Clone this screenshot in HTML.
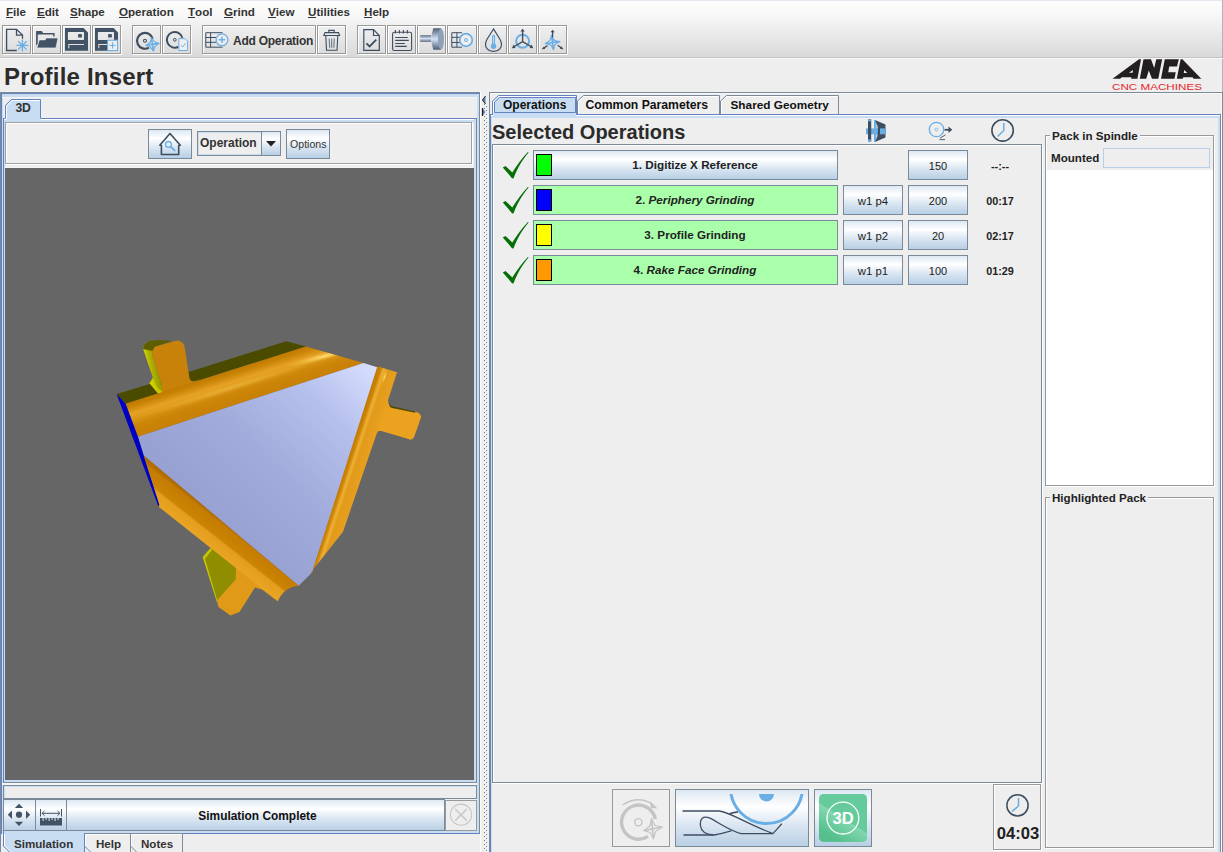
<!DOCTYPE html>
<html><head><meta charset="utf-8">
<style>
*{box-sizing:border-box;margin:0;padding:0}
html,body{width:1223px;height:852px;overflow:hidden;background:#eeeeee;font-family:"Liberation Sans",sans-serif;color:#333333;position:relative}
.a{position:absolute}
.b{font-weight:bold}
.menu{left:0;top:0;width:1223px;height:57px;background:linear-gradient(#fdfdfd 0px,#f8f8f8 14px,#dadada 56px)}
.mi{position:absolute;top:5px;font-size:11.6px;font-weight:bold;color:#333}
.mi u{text-decoration:none;display:inline-block;line-height:11px;border-bottom:1px solid #333;}
.tb{position:absolute;top:25px;height:29px;width:29px;border:1px solid #999;background:transparent;box-shadow:inset 1px 1px 0 #fff,1px 1px 0 #fff}
.sep57{left:0;top:57px;width:1223px;height:1px;background:#c4c4c4}
.btn{position:absolute;border:1px solid #7a8a99;background:linear-gradient(#dde8f3 0%,#ffffff 30%,#dde8f3 60%,#b8cfe5 100%)}
.btn2{position:absolute;border:1px solid #7a8a99;background:linear-gradient(#dde8f3 0%,#ffffff 25%,#b8cfe5 100%)}
.gbtn{position:absolute;border:1px solid #7a8a99;background:#aaffaa}
.sw{position:absolute;left:2px;top:2px;width:17px;height:20px;border:1px solid #000}
.lbl{position:absolute;left:0;right:0;text-align:center;font-size:12px;font-weight:bold;color:#333}
</style></head>
<body>
<!-- menubar + toolbar -->
<div class="a menu"></div>
<div class="a" style="left:0;top:0;width:1223px;height:1px;background:#e4e8ee"></div>
<div class="mi" style="left:6px"><u>F</u>ile</div>
<div class="mi" style="left:37px"><u>E</u>dit</div>
<div class="mi" style="left:70px"><u>S</u>hape</div>
<div class="mi" style="left:119px"><u>O</u>peration</div>
<div class="mi" style="left:188px"><u>T</u>ool</div>
<div class="mi" style="left:224px"><u>G</u>rind</div>
<div class="mi" style="left:268px"><u>V</u>iew</div>
<div class="mi" style="left:308px"><u>U</u>tilities</div>
<div class="mi" style="left:364px"><u>H</u>elp</div>

<div class="tb" style="left:2px;width:29px"></div>
<div class="tb" style="left:32px;width:29px"></div>
<div class="tb" style="left:62px;width:29px"></div>
<div class="tb" style="left:92px;width:29px"></div>
<div class="tb" style="left:132px;width:29px"></div>
<div class="tb" style="left:162px;width:29px"></div>
<div class="tb" style="left:202px;width:114px"></div>
<div class="tb" style="left:317px;width:29px"></div>
<div class="tb" style="left:357px;width:29px"></div>
<div class="tb" style="left:387px;width:29px"></div>
<div class="tb" style="left:417px;width:29px"></div>
<div class="tb" style="left:447px;width:30px"></div>
<div class="tb" style="left:478px;width:29px"></div>
<div class="tb" style="left:508px;width:29px"></div>
<div class="tb" style="left:538px;width:29px"></div>
<div class="a b" style="left:233px;top:34px;font-size:12px;line-height:14px;color:#333;letter-spacing:-0.25px">Add Operation</div>
<svg class="a" style="left:0;top:0" width="600" height="58" viewBox="0 0 600 58">
<defs>
<linearGradient id="shaft" x1="0" y1="0" x2="0" y2="1"><stop offset="0" stop-color="#5d6c80"/><stop offset="0.5" stop-color="#d0def0"/><stop offset="1" stop-color="#5d6c80"/></linearGradient>
<linearGradient id="whl" x1="0" y1="0" x2="0" y2="1"><stop offset="0" stop-color="#4e5e72"/><stop offset="0.5" stop-color="#d4e2f6"/><stop offset="1" stop-color="#4e5e72"/></linearGradient>
</defs>
<g fill="none" stroke="#3e4e61" stroke-width="1.3">
<!-- new doc -->
<path d="M16.8 50.5 H6.6 V29.3 H16.5 L22.5 35.1 V38.7"/>
<path d="M16.5 29.3 V35.1 H22.5"/>
</g>
<g stroke="#6aaee6" stroke-width="1.3">
<path d="M22.4 39.4 V51.4 M16.4 45.4 H28.4 M18.2 41.2 L26.6 49.6 M26.6 41.2 L18.2 49.6"/>
</g>
<!-- folder -->
<path fill="#435366" d="M36.1 31.1 H41.8 L43.1 32.9 H54.6 V36.5 H53.2 V34.6 H37.8 V43.5 L36.6 45.5 L36.1 44.5 Z"/>
<path fill="#435366" stroke="#eeeeee" stroke-width="0.6" d="M36.9 47.9 H55.9 L58 38 H46.2 L45.2 39.9 H39.3 Z"/>
<!-- save -->
<g fill="#435366">
<path d="M65 28 H83.6 L88 32.5 V50.8 H65 Z M68.5 31.9 Q67.9 31.9 67.9 32.6 V39.3 Q67.9 40 68.5 40 H83.4 Q84 40 84 39.3 V32.6 Q84 31.9 83.4 31.9 Z M68.3 44 V48.2 H69.3 V45 H84 V44 Z" fill-rule="evenodd"/>
<rect x="78.1" y="34.1" width="3.8" height="3.4"/>
<path d="M95 28 H113.6 L118 32.5 V50.8 H95 Z M98.5 31.9 Q97.9 31.9 97.9 32.6 V39.3 Q97.9 40 98.5 40 H113.4 Q114 40 114 39.3 V32.6 Q114 31.9 113.4 31.9 Z M98.3 44 V48.2 H99.3 V45 H114 V44 Z" fill-rule="evenodd"/>
<rect x="108.1" y="34.1" width="3.8" height="3.4"/>
</g>
<rect x="107.6" y="40.2" width="10" height="10.4" fill="#eeeeee" stroke="#6aaee6" stroke-width="1"/>
<path d="M112.6 42.3 V48.5 M109.6 45.4 H115.6" stroke="#6aaee6" stroke-width="1"/>
<!-- disc 1 -->
<g fill="none" stroke="#3e4e61">
<path d="M152.6 38.8 A7.9 7.9 0 1 0 148.95 47.64" stroke-width="2.2"/>
<circle cx="145" cy="40.8" r="1.5" stroke-width="1.1"/>
<path d="M182.4 37.8 A7.9 7.9 0 1 0 178.75 46.64" stroke-width="2"/>
<circle cx="174.8" cy="39.8" r="1.4" stroke-width="1"/>
</g>
<path d="M151.5 38.1 L155 42 L158.8 43.4 L154.8 46.5 L153.4 50.8 L150.2 46.8 L146.1 45.3 L150.2 42.3 Z" fill="none" stroke="#6aaee6" stroke-width="1.1"/><path d="M151.5 38.1 L153.4 50.8 M146.1 45.3 L158.8 43.4" stroke="#6aaee6" stroke-width="1.6"/>
<path d="M178.8 38.6 H185 L187.6 41.2 V50.5 H178.8 Z" fill="#eeeeee" stroke="#6aaee6" stroke-width="1"/>
<path d="M180.8 45.5 L182.5 47 L185.5 43.4" fill="none" stroke="#6aaee6" stroke-width="1"/>
<!-- add op table -->
<g fill="none" stroke="#3e4e61" stroke-width="1">
<path d="M222.6 32.7 H205.8 V47.2 H222.6 M210.6 32.7 V47.2 M205.8 37.5 H216 M205.8 42.3 H216"/>
</g>
<circle cx="222" cy="39.8" r="5.9" fill="#eeeeee" stroke="#6aaee6" stroke-width="1.3"/>
<path d="M222 36.5 V43.1 M218.7 39.8 H225.3" stroke="#6aaee6" stroke-width="1.4"/>
<!-- trash -->
<g fill="none" stroke="#3e4e61" stroke-width="1.1">
<path d="M328.8 32.2 V30.4 H334.2 V32.2"/>
<path d="M323.8 35.5 L325 32.6 H338.5 L339.6 35.5 Z"/>
<path d="M325.8 35.8 L326.5 50.3 H337 L337.8 35.8"/>
<path d="M329.2 38.5 L329.7 47.8 M331.7 38.5 V47.8 M334.3 38.5 L333.8 47.8" stroke="#6b7988"/>
</g>
<!-- doc check -->
<g fill="none" stroke="#3e4e61" stroke-width="1.2">
<path d="M373.5 29.6 H363.8 V50.4 H379.3 V35.5 Z"/>
<path d="M373.5 29.6 V35.5 H379.3"/>
</g>
<path d="M366.4 43.3 L369.6 46.4 L376.3 39.6" fill="none" stroke="#3e4e61" stroke-width="1.8"/>
<!-- notepad -->
<g fill="none" stroke="#3e4e61" stroke-width="1.1">
<rect x="392.6" y="32.3" width="19" height="18.2" rx="1.6"/>
<path d="M395.4 30 V33.6 M399.4 30 V33.6 M403.4 30 V33.6 M407.4 30 V33.6"/>
<path d="M395.2 37.5 H407.8 M395.2 40.4 H408.8 M395.2 43.5 H404.8 M395.2 46.4 H406.8"/>
</g>
<!-- wheel -->
<rect x="420.2" y="35.2" width="11" height="6.7" fill="url(#shaft)"/>
<path d="M433.3 28.2 H441 V49.7 H433.3 Q429.3 39 433.3 28.2 Z" fill="url(#whl)"/>
<ellipse cx="441" cy="39" rx="3" ry="10.6" fill="#8fa1b9"/>
<!-- table disc -->
<g fill="none" stroke="#3e4e61" stroke-width="1">
<path d="M462 32.7 H451.8 V47.2 H462 M456.9 32.7 V47.2 M451.8 37.3 H460 M451.8 42.5 H460"/>
</g>
<circle cx="466" cy="40" r="6.3" fill="#eeeeee" stroke="#6aaee6" stroke-width="1.7"/>
<circle cx="466" cy="40" r="1.5" fill="none" stroke="#6aaee6" stroke-width="1"/>
<!-- drop -->
<path d="M493.5 29 L487.2 39 Q484.6 43.5 486 47 Q488 51.3 493.5 51.3 Q499 51.3 501 47 Q502.4 43.5 499.8 39 Z" fill="none" stroke="#3e4e61" stroke-width="1.2"/>
<rect x="492" y="34.8" width="3.1" height="11" rx="1.5" fill="#6aaee6"/>
<rect x="493.2" y="36" width="0.8" height="7.5" fill="#cfe4f8"/>
<circle cx="493.55" cy="46.2" r="2.7" fill="#6aaee6"/>
<!-- axes 1 -->
<circle cx="522.6" cy="41.2" r="6.5" fill="none" stroke="#6aaee6" stroke-width="2"/>
<g stroke="#3e4e61" stroke-width="1.4" fill="#3e4e61">
<path d="M522.6 41.6 V30.5 M522.6 41.6 L513.5 47 M522.6 41.6 L531.7 47" fill="none"/>
<path d="M520.4 31.5 L522.6 28.8 L524.8 31.5 Z M513.8 44.6 L511.8 48.2 L515.6 47.9 Z M531.4 44.6 L533.4 48.2 L529.6 47.9 Z" stroke="none"/>
</g>
<!-- axes 2 -->
<g stroke="#6aaee6" fill="none">
<path d="M551.5 35.5 L554 40.5 L559.5 41.6 L555 44.5 L553.5 49.5 L550.7 45 L545.5 43.5 L550 40.5 Z" stroke-width="1.1"/>
<path d="M551.5 35.5 L553.5 49.5 M545.5 43.5 L559.5 41.6" stroke-width="1.7"/>
<path d="M552.2 39.3 A3.3 3.3 0 0 1 555.8 42.5" stroke-width="1.1"/>
</g>
<g stroke="#3e4e61" stroke-width="1.3" fill="#3e4e61">
<path d="M552.6 37.5 V31.5 M547.5 45.6 L543.5 48.2 M557.7 45.2 L561.5 48" fill="none"/>
<path d="M550.5 32.3 L552.6 29.8 L554.7 32.3 Z M544 46.4 L541.7 49.3 L545.3 49 Z M561.3 46.2 L563.6 49.2 L560 49 Z" stroke="none"/>
</g>
</svg>
<div class="a sep57"></div>
<div class="a" style="left:1222px;top:0;width:1px;height:92px;background:#b4b4b4"></div>
<div class="a" style="left:0;top:58px;width:1223px;height:1px;background:#f6f6f6"></div>

<!-- title -->
<div class="a b" style="left:4px;top:63px;font-size:24px;color:#2b2b2b;line-height:28px;letter-spacing:0.2px">Profile Insert</div>


<!-- ===== LEFT PANEL ===== -->
<div class="a" style="left:0;top:92px;width:480px;height:1px;background:#7a8a99"></div>
<div class="a" style="left:0;top:92px;width:1px;height:760px;background:#7a8a99"></div>
<div class="a" style="left:479px;top:92px;width:1px;height:742px;background:#7a8a99"></div>
<div class="a" style="left:480px;top:92px;width:1px;height:760px;background:#ffffff"></div>
<div class="a" style="left:1px;top:93px;width:478px;height:1px;background:#6382bf"></div>
<div class="a" style="left:1px;top:93px;width:1px;height:741px;background:#6382bf"></div>
<div class="a" style="left:2px;top:94px;width:477px;height:3px;background:#c8ddf2"></div>
<div class="a" style="left:2px;top:94px;width:1px;height:739px;background:#c8ddf2"></div>
<div class="a" style="left:477px;top:94px;width:2px;height:739px;background:#c8ddf2"></div>
<div class="a" style="left:2px;top:831px;width:477px;height:2px;background:#c8ddf2"></div>
<div class="a" style="left:84px;top:833px;width:396px;height:1px;background:#6382bf"></div>
<div class="a" style="left:2px;top:97px;width:475px;height:1px;background:#f5f4f2"></div>
<!-- inner tab pane content -->
<div class="a" style="left:3px;top:118px;width:474px;height:665px;background:#c8ddf2;border-top:1px solid #6382bf;border-left:1px solid #6382bf;border-right:1px solid #7a8a99;border-bottom:1px solid #7a8a99"></div>
<div class="a" style="left:40px;top:119px;width:434px;height:1px;background:#fff"></div>
<div class="a" style="left:5px;top:122px;width:469px;height:658px;background:#eeeeee"></div>
<!-- 3D tab -->
<svg class="a" style="left:0;top:96px" width="50" height="26" viewBox="0 96 50 26">
<path d="M5 122 V105 L11 99 H41 V122 Z" fill="#c8ddf2"/>
<path d="M5.5 118 V105.5 L11.5 99.5 H40.5 V118.5" fill="none" stroke="#6382bf" stroke-width="1"/>
<path d="M6.5 119 V106 L12 100.5 H39.5" fill="none" stroke="#fff" stroke-width="1"/>
<path d="M3 118.5 H5.5" stroke="#6382bf" stroke-width="1"/>
<path d="M4 119.5 H6" stroke="#fff" stroke-width="1"/>
</svg>
<div class="a b" style="left:15.5px;top:101px;font-size:12.2px;line-height:14px;color:#333;letter-spacing:-0.3px">3D</div>
<!-- toolbar box -->
<div class="a" style="left:5px;top:122px;width:467px;height:42px;border:1px solid #a0a0a0;box-shadow:inset 1px 1px 0 #fff,1px 1px 0 #fff"></div>
<div class="btn" style="left:148px;top:129px;width:44px;height:30px"></div>
<svg class="a" style="left:148px;top:129px" width="44" height="30" viewBox="148 129 44 30">
<path d="M161.4 154.5 V145.3 H159.8 L170 133.5 L180.3 145.3 H178.7 V154.5 Z" fill="none" stroke="#3e4e61" stroke-width="1.6" stroke-linejoin="round"/>
<circle cx="168.5" cy="144.4" r="2.9" fill="none" stroke="#6aaee6" stroke-width="1.3"/>
<path d="M170.6 146.6 L174.6 150.4" stroke="#6aaee6" stroke-width="1.8" stroke-linecap="round"/>
</svg>
<div class="a" style="left:197px;top:131px;width:84px;height:25px;border:1px solid #7a8a99;background:#eeeeee;box-shadow:inset 1px 1px 0 #c8ddf2, inset -1px -1px 0 #c8ddf2"></div>
<div class="btn" style="left:261px;top:131px;width:20px;height:25px"></div>
<svg class="a" style="left:262px;top:132px" width="18" height="23" viewBox="262 132 18 23"><path d="M266 141 H276 L271 146.5 Z" fill="#222"/></svg>
<div class="a b" style="left:200px;top:136px;font-size:12px;line-height:14px;color:#333">Operation</div>
<div class="btn" style="left:286px;top:129px;width:44px;height:30px"></div>
<div class="a" style="left:290px;top:138px;font-size:10.6px;line-height:12px;color:#333">Options</div>
<!-- viewport -->
<div class="a" style="left:5px;top:168px;width:469px;height:612px;background:#666666"></div>
<div class="a" style="left:5px;top:167px;width:469px;height:1px;background:#f6f6f6"></div>

<!-- 3D model -->
<svg class="a" style="left:5px;top:168px" width="469" height="612" viewBox="5 168 469 612">
<defs>
<linearGradient id="lf" gradientUnits="userSpaceOnUse" x1="372" y1="362" x2="220" y2="520"><stop offset="0" stop-color="#d8e0ff"/><stop offset="0.3" stop-color="#b6c0ec"/><stop offset="0.65" stop-color="#a2acdc"/><stop offset="1" stop-color="#98a2d2"/></linearGradient>
<linearGradient id="tb" gradientUnits="userSpaceOnUse" x1="241" y1="364" x2="251.5" y2="397"><stop offset="0" stop-color="#bc7600"/><stop offset="0.2" stop-color="#c88204"/><stop offset="0.42" stop-color="#e6a226"/><stop offset="0.52" stop-color="#de9a1a"/><stop offset="0.75" stop-color="#cc8608"/><stop offset="1" stop-color="#c88006"/></linearGradient>
<linearGradient id="hl" gradientUnits="userSpaceOnUse" x1="250" y1="360" x2="350" y2="360"><stop offset="0" stop-color="#ffd050" stop-opacity="0"/><stop offset="0.5" stop-color="#ffd860" stop-opacity="0.9"/><stop offset="1" stop-color="#ffd050" stop-opacity="0"/></linearGradient>
<linearGradient id="rb" gradientUnits="userSpaceOnUse" x1="353.2" y1="440" x2="373.2" y2="446.6"><stop offset="0" stop-color="#c07804"/><stop offset="0.18" stop-color="#cc8406"/><stop offset="0.33" stop-color="#eeb034"/><stop offset="0.48" stop-color="#e29a1a"/><stop offset="1" stop-color="#e8a020"/></linearGradient>
<linearGradient id="ys" gradientUnits="userSpaceOnUse" x1="145" y1="365" x2="160" y2="362"><stop offset="0" stop-color="#e0e000"/><stop offset="0.4" stop-color="#b0b000"/><stop offset="1" stop-color="#8a8a00"/></linearGradient>
</defs>
<!-- olive top band -->
<path d="M116.6 394 L145 385.5 L195 370 L286.3 341.2 L306 346.4 L125.6 403.8 Z" fill="#4b4b00"/>
<!-- tab upper-left -->
<path d="M142.8 348 L147.8 362.7 L152.9 377.4 Q151 381 149.4 383 L158 393.5 L163 393 L161.8 384.3 L152.3 355 L154.8 346.8 L152.5 340.2 Q145 342 142.8 348 Z" fill="url(#ys)"/>
<path d="M149.4 383 Q153 380 152.9 377.4 L156 386 Q159 390 162 391 L162.5 393.5 L158 393.5 Z" fill="#d4d400" opacity="0.7"/>
<path d="M142.8 349 Q143.5 343.5 150 340.8 L160 340 L171.8 341 L154.8 346.8 L152.6 351 Z" fill="#5e5e00"/>
<path d="M152.6 351 L154.8 346.8 L176.5 340.6 Q182.5 340.5 184.6 346.4 L188.1 369.6 L189.6 378.9 Q190.5 381 193.5 381.3 L201 379 L162.5 395 L161.8 384.3 L152.3 355 Z" fill="#c8820a"/>
<!-- orange top band -->
<path d="M125.6 403.8 L306 346.4 L363.5 362.9 L137.9 436.7 Z" fill="url(#tb)"/>
<clipPath id="bandclip"><path d="M125.6 403.8 L306 346.4 L363.5 362.9 L137.9 436.7 Z"/></clipPath>
<radialGradient id="hlr"><stop offset="0" stop-color="#ffe27a" stop-opacity="1"/><stop offset="0.5" stop-color="#f8c850" stop-opacity="0.6"/><stop offset="1" stop-color="#f0b040" stop-opacity="0"/></radialGradient>
<g clip-path="url(#bandclip)"><ellipse cx="325" cy="356" rx="42" ry="4" transform="rotate(-15 325 356)" fill="url(#hlr)"/><ellipse cx="230" cy="388" rx="110" ry="4" transform="rotate(-17.5 230 388)" fill="url(#hlr)" opacity="0.35"/></g>
<!-- light face -->
<path d="M137.9 436.7 L363.5 362.9 L378 367.5 L312 572.6 L298.7 585.8 L143.7 455.5 Z" fill="url(#lf)"/>
<!-- blue strip -->
<path d="M116.6 394 L125.6 403.8 L137.9 436.7 L143.7 455.5 L159.5 505 L158.4 506.5 Z" fill="#0000c4"/>
<!-- bottom tab -->
<path d="M202.7 557.1 L210.4 548.3 L214 544 L240 566 L235.8 579.2 L218 603 Z" fill="#8e8e00"/>
<path d="M202.7 557.1 L210.4 548.3 L212 550 L205 558.5 L218 603 L216.5 601 Z" fill="#c6c600"/>
<path d="M217 600.5 L235.8 579.2 L236 566 L274 594 L277.8 601.3 L262 589.5 L255 587.5 L239.5 612 L230.5 615.6 L218.5 607 Z" fill="#e09a18"/>
<!-- lower-left bevel -->
<linearGradient id="llb" gradientUnits="userSpaceOnUse" x1="220.4" y1="520" x2="203.7" y2="541.2"><stop offset="0" stop-color="#b46c00"/><stop offset="0.1" stop-color="#c47c02"/><stop offset="0.56" stop-color="#cc8404"/><stop offset="0.63" stop-color="#e49e1e"/><stop offset="1" stop-color="#eaa424"/></linearGradient>
<path d="M143.7 455.5 L298.7 585.8 Q284 587 277.8 601.3 L158.4 506.5 L159.5 505 Z" fill="url(#llb)"/>
<!-- right bevel -->
<path d="M377.4 366.3 L397 372.2 L388 400.2 Q388.3 405.5 391.7 407 L415 411.8 Q421.5 413.5 420.8 417.6 L413.9 437.2 Q411.5 440.5 408.1 438.8 L381.1 430.8 Q377.8 430 376.9 433 L343 531.7 L309.8 573.7 L312 572.6 Z" fill="url(#rb)"/>
<path d="M391.7 407 L415 411.8 Q421.5 413.5 420.8 417.6 L413.9 437.2 Q411.5 440.5 408.1 438.8 L381.1 430.8 Q377.8 430 376.9 433 L384 410 Z" fill="#eba21e"/>
<path d="M389 404 Q389.5 407 392 408 L415 412.8 L415.5 411.5 L392 406.2 Q390 405.5 389 403 Z" fill="#3c3c00" opacity="0.85"/>
<ellipse cx="384.5" cy="377" rx="1.6" ry="8" transform="rotate(18 384.5 377)" fill="url(#hlr)"/>
</svg>
<!-- status box -->
<div class="a" style="left:2px;top:783px;width:475px;height:2px;background:#f6f5f3"></div>
<div class="a" style="left:3px;top:785px;width:474px;height:14px;border:1px solid #7a8a99;background:#eeeeee;box-shadow:inset 1px 1px 0 #c8ddf2"></div>
<div class="btn" style="left:3px;top:799px;width:33px;height:32px"></div>
<div class="btn" style="left:35px;top:799px;width:32px;height:32px"></div>
<div class="btn" style="left:66px;top:799px;width:379px;height:32px"></div>
<div class="a b" style="left:68px;top:809px;width:379px;text-align:center;font-size:11.9px;line-height:14px;color:#111">Simulation Complete</div>
<div class="a" style="left:445px;top:800px;width:32px;height:31px;border:1px solid #9a9a9a;background:#eeeeee"></div>
<svg class="a" style="left:0;top:798px" width="480" height="34" viewBox="0 798 480 34">
<g fill="#435366">
<path d="M14.8 808 L19 803.8 L23.2 808 Z M14.8 821.8 L19 826 L23.2 821.8 Z M12 810.6 L7.8 814.8 L12 819 Z M26 810.6 L30.2 814.8 L26 819 Z"/>
<circle cx="19" cy="814.7" r="3.1"/>
<path d="M40 818 H62 V825.5 H40 Z"/>
</g>
<g fill="#dde8f3"><rect x="42.6" y="818" width="1" height="3"/><rect x="45.6" y="818" width="1" height="2"/><rect x="48.6" y="818" width="1" height="3"/><rect x="51.6" y="818" width="1" height="2"/><rect x="54.6" y="818" width="1" height="3"/><rect x="57.6" y="818" width="1" height="2"/></g>
<g stroke="#435366" stroke-width="1" fill="none">
<path d="M40.5 809 V816.5 M61.5 809 V816.5 M42 813.3 H60 M44.5 811 L42 813.3 L44.5 815.6 M57.5 811 L60 813.3 L57.5 815.6"/>
</g>
<circle cx="461" cy="814.7" r="10.6" fill="none" stroke="#c8c8c8" stroke-width="1.1"/>
<path d="M455.2 809 L466.8 820.6 M466.8 809 L455.2 820.6" stroke="#c8c8c8" stroke-width="1.5"/>
</svg>
<!-- bottom tabs -->
<svg class="a" style="left:0;top:831px" width="200" height="21" viewBox="0 831 200 21">
<path d="M84.5 852 V833.5 H130.5 V852" fill="#eeeeee" stroke="#7a8a99"/>
<path d="M85.5 846 V834.5 H129.5" fill="none" stroke="#fff"/>
<path d="M130.5 852 V833.5 H182.5 V852" fill="#eeeeee" stroke="#7a8a99"/>
<path d="M131.5 846 V834.5 H181.5" fill="none" stroke="#fff"/>
<path d="M84.5 846 L90.5 852 M130.5 846 L136.5 852" stroke="#7a8a99" fill="none"/>
<path d="M3 831 V846 L9 852 H84.5 V831 Z" fill="#c8ddf2"/>
<path d="M3.5 831 V846 L9.5 852 M84.5 833 V852" fill="none" stroke="#6382bf"/>
<path d="M4.5 834 V845.5 L10.5 851.5" fill="none" stroke="#fff"/>
</svg>
<div class="a b" style="left:14px;top:837px;font-size:11.6px;line-height:14px;color:#333">Simulation</div>
<div class="a b" style="left:96px;top:837px;font-size:11.6px;line-height:14px;color:#333">Help</div>
<div class="a b" style="left:141px;top:837px;font-size:11.6px;line-height:14px;color:#333">Notes</div>


<!-- ===== SPLITTER ===== -->
<svg class="a" style="left:481px;top:92px" width="8" height="760" viewBox="481 92 8 760">
<defs><pattern id="bumps" patternUnits="userSpaceOnUse" x="484" y="104" width="4" height="4"><rect x="1" y="1" width="1" height="1" fill="#fff"/><rect x="3" y="3" width="1" height="1" fill="#fff"/><rect x="0" y="0" width="1" height="1" fill="#6f7f8e"/><rect x="2" y="2" width="1" height="1" fill="#6f7f8e"/></pattern></defs>
<rect x="484" y="104" width="4" height="748" fill="url(#bumps)"/>
<path d="M485.5 96 L482.5 100 L485.5 104 Z" fill="#6382bf"/>
<path d="M485.5 96 L482.5 100 L485.5 104" fill="none" stroke="#222" stroke-width="1"/>
<path d="M482.5 108 L485.5 112 L482.5 116 Z" fill="#6382bf"/>
<path d="M482.5 108 V116" fill="none" stroke="#222" stroke-width="1.2"/>

</svg>
<!-- ===== RIGHT PANEL ===== -->
<div class="a" style="left:489px;top:92px;width:734px;height:1px;background:#7a8a99"></div>
<div class="a" style="left:489px;top:92px;width:1px;height:760px;background:#7a8a99"></div>
<div class="a" style="left:1222px;top:92px;width:1px;height:760px;background:#7a8a99"></div>
<div class="a" style="left:490px;top:93px;width:732px;height:1px;background:#f8f8f8"></div>
<div class="a" style="left:1221px;top:93px;width:1px;height:759px;background:#fafafa"></div>
<!-- content area -->
<div class="a" style="left:490px;top:114px;width:731px;height:738px;background:#c8ddf2;border-top:1px solid #6382bf;border-left:1px solid #6382bf;border-right:1px solid #7a8a99"></div>
<div class="a" style="left:491px;top:115px;width:729px;height:1px;background:#fff"></div>
<div class="a" style="left:492px;top:118px;width:726px;height:734px;background:#eeeeee"></div>
<!-- tabs -->
<svg class="a" style="left:489px;top:92px" width="360" height="26" viewBox="489 92 360 26">
<path d="M577.5 114 V101 L583.5 95.5 H719.5 V114" fill="#eeeeee" stroke="#7a8a99"/>
<path d="M578.5 114 V101.5 L584 96.5 H718.5" fill="none" stroke="#fff"/>
<path d="M720.5 114 V101 L726.5 95.5 H838.5 V114" fill="#eeeeee" stroke="#7a8a99"/>
<path d="M721.5 114 V101.5 L727 96.5 H837.5" fill="none" stroke="#fff"/>
<path d="M492.5 114.5 V101 L498.5 95.5 H576.5 V114.5" fill="#c8ddf2" stroke="#6382bf"/>
<path d="M493.5 114 V101.5 L499 96.5 H575.5" fill="none" stroke="#fff"/>
<path d="M494.5 112.5 V102 L499.5 97.5 H575.5 V112.5 Z" fill="#c8ddf2" stroke="#6382bf"/>
<rect x="493" y="113" width="83" height="5" fill="#c8ddf2"/><rect x="491" y="115" width="2" height="1" fill="#fff"/>
<path d="M490 114.5 H492.5" stroke="#6382bf"/>
</svg>
<div class="a b" style="left:503px;top:98px;font-size:12px;line-height:14px;color:#111">Operations</div>
<div class="a b" style="left:585.5px;top:98px;font-size:12.2px;line-height:14px;color:#111">Common Parameters</div>
<div class="a b" style="left:730.5px;top:98px;font-size:11.8px;line-height:14px;color:#111">Shared Geometry</div>
<!-- selected ops header -->
<div class="a b" style="left:492px;top:121px;font-size:20px;line-height:22px;color:#2b2b2b">Selected Operations</div>
<svg class="a" style="left:860px;top:116px" width="160" height="28" viewBox="860 116 160 28">
<rect x="866" y="128.4" width="19.5" height="5.9" fill="#6aaee6"/>
<rect x="868" y="119.3" width="3.2" height="22.2" fill="#3e4e61"/>
<rect x="868" y="119.3" width="3.2" height="2" fill="#6aaee6"/>
<rect x="868" y="139.5" width="3.2" height="2" fill="#6aaee6"/>
<path d="M874 120 L876.5 121 V141 L874 142 Z" fill="#6aaee6"/>
<path d="M875 120 L885.5 124.5 V137.5 L875 142 Q881 131 875 120 Z" fill="#3e4e61"/>
<rect x="880" y="128.4" width="5.5" height="5.9" fill="#6aaee6"/>
<circle cx="936.5" cy="129.5" r="7.2" fill="none" stroke="#6aaee6" stroke-width="1.3"/>
<path d="M936.5 127.8 L938.2 129.5 L936.5 131.2 L934.8 129.5 Z" fill="none" stroke="#6aaee6" stroke-width="0.9"/>
<path d="M944.5 129.8 H949" stroke="#3e4e61" stroke-width="1.8"/>
<path d="M948.5 126.6 L952.3 129.8 L948.5 133 Z" fill="#3e4e61"/>
<path d="M940 138.2 L945.5 134.8 M939.5 139.6 H945" stroke="#3e4e61" stroke-width="0.9"/>
<circle cx="1002.6" cy="130.4" r="10.7" fill="none" stroke="#3e4e61" stroke-width="1.6"/>
<path d="M1003.8 123 V130.5 L997.5 136.5" fill="none" stroke="#6aaee6" stroke-width="1.5"/>
</svg>
<!-- ops list box -->
<div class="a" style="left:492px;top:144px;width:550px;height:639px;border:1px solid #7a8a99;box-shadow:inset 1px 1px 0 #fff,1px 1px 0 #fff"></div>
<svg class="a" style="left:500px;top:150px" width="32" height="31" viewBox="500 150 32 31"><path d="M502.8 167.6 L505.5 166 L512.3 172.4 C517 165 522 158 527.9 152 L528.6 152.6 C523 159 518 167 513.6 178.2 L512.2 178.4 Z" fill="#067006"/></svg>
<div class="btn" style="left:533px;top:150px;width:305px;height:30px"></div>
<div class="sw" style="left:536px;top:154px;width:16px;height:22px;background:#00ff00;border:1px solid #000"></div>
<div class="a b" style="left:553px;top:158px;width:284px;text-align:center;font-size:11.7px;line-height:14px;color:#222">1. Digitize X Reference</div>
<div class="btn" style="left:908px;top:150px;width:60px;height:30px"></div>
<div class="a" style="left:908px;top:160px;width:60px;text-align:center;font-size:11px;line-height:13px;color:#222">150</div>
<div class="a b" style="left:970px;top:160px;width:60px;text-align:center;font-size:10.8px;line-height:13px;color:#222">--:--</div>
<svg class="a" style="left:500px;top:185px" width="32" height="31" viewBox="500 185 32 31"><path d="M502.8 202.6 L505.5 201 L512.3 207.4 C517 200 522 193 527.9 187 L528.6 187.6 C523 194 518 202 513.6 213.2 L512.2 213.4 Z" fill="#067006"/></svg>
<div class="gbtn" style="left:533px;top:185px;width:305px;height:30px"></div>
<div class="sw" style="left:536px;top:189px;width:16px;height:22px;background:#0000ff;border:1px solid #000"></div>
<div class="a b" style="left:553px;top:193px;width:284px;text-align:center;font-size:11.7px;line-height:14px;color:#222">2. <i>Periphery Grinding</i></div>
<div class="btn" style="left:843px;top:185px;width:60px;height:30px"></div>
<div class="a" style="left:843px;top:195px;width:60px;text-align:center;font-size:11.4px;line-height:13px;color:#222">w1 p4</div>
<div class="btn" style="left:908px;top:185px;width:60px;height:30px"></div>
<div class="a" style="left:908px;top:195px;width:60px;text-align:center;font-size:11px;line-height:13px;color:#222">200</div>
<div class="a b" style="left:970px;top:195px;width:60px;text-align:center;font-size:10.8px;line-height:13px;color:#222">00:17</div>
<svg class="a" style="left:500px;top:220px" width="32" height="31" viewBox="500 220 32 31"><path d="M502.8 237.6 L505.5 236 L512.3 242.4 C517 235 522 228 527.9 222 L528.6 222.6 C523 229 518 237 513.6 248.2 L512.2 248.4 Z" fill="#067006"/></svg>
<div class="gbtn" style="left:533px;top:220px;width:305px;height:30px"></div>
<div class="sw" style="left:536px;top:224px;width:16px;height:22px;background:#ffff00;border:1px solid #000"></div>
<div class="a b" style="left:553px;top:228px;width:284px;text-align:center;font-size:11.7px;line-height:14px;color:#222">3. Profile Grinding</div>
<div class="btn" style="left:843px;top:220px;width:60px;height:30px"></div>
<div class="a" style="left:843px;top:230px;width:60px;text-align:center;font-size:11.4px;line-height:13px;color:#222">w1 p2</div>
<div class="btn" style="left:908px;top:220px;width:60px;height:30px"></div>
<div class="a" style="left:908px;top:230px;width:60px;text-align:center;font-size:11px;line-height:13px;color:#222">20</div>
<div class="a b" style="left:970px;top:230px;width:60px;text-align:center;font-size:10.8px;line-height:13px;color:#222">02:17</div>
<svg class="a" style="left:500px;top:255px" width="32" height="31" viewBox="500 255 32 31"><path d="M502.8 272.6 L505.5 271 L512.3 277.4 C517 270 522 263 527.9 257 L528.6 257.6 C523 264 518 272 513.6 283.2 L512.2 283.4 Z" fill="#067006"/></svg>
<div class="gbtn" style="left:533px;top:255px;width:305px;height:30px"></div>
<div class="sw" style="left:536px;top:259px;width:16px;height:22px;background:#ff9900;border:1px solid #000"></div>
<div class="a b" style="left:553px;top:263px;width:284px;text-align:center;font-size:11.7px;line-height:14px;color:#222">4. <i>Rake Face Grinding</i></div>
<div class="btn" style="left:843px;top:255px;width:60px;height:30px"></div>
<div class="a" style="left:843px;top:265px;width:60px;text-align:center;font-size:11.4px;line-height:13px;color:#222">w1 p1</div>
<div class="btn" style="left:908px;top:255px;width:60px;height:30px"></div>
<div class="a" style="left:908px;top:265px;width:60px;text-align:center;font-size:11px;line-height:13px;color:#222">100</div>
<div class="a b" style="left:970px;top:265px;width:60px;text-align:center;font-size:10.8px;line-height:13px;color:#222">01:29</div>

<!-- pack in spindle -->
<div class="a" style="left:1045px;top:135px;width:169px;height:351px;border:1px solid #999;box-shadow:inset 1px 1px 0 #fff,1px 1px 0 #fff"></div>
<div class="a" style="left:1047px;top:170px;width:166px;height:315px;background:#fff"></div>
<div class="a" style="left:1050px;top:126px;height:14px;background:#eeeeee;padding:0 2px"><span class="b" style="font-size:11.6px;line-height:14px;color:#222">Pack in Spindle</span></div>
<div class="a b" style="left:1051px;top:151px;font-size:11.6px;line-height:14px;color:#222">Mounted</div>
<div class="a" style="left:1103px;top:148px;width:107px;height:20px;border:1px solid #b8cfe5;background:#eeeeee"></div>
<!-- highlighted pack -->
<div class="a" style="left:1045px;top:497px;width:169px;height:351px;border:1px solid #999;box-shadow:inset 1px 1px 0 #fff,1px 1px 0 #fff"></div>
<div class="a" style="left:1050px;top:488px;height:14px;background:#eeeeee;padding:0 2px"><span class="b" style="font-size:11.6px;line-height:14px;color:#222">Highlighted Pack</span></div>
<!-- bottom buttons -->
<div class="a" style="left:612px;top:789px;width:58px;height:58px;border:1px solid #999;background:#eeeeee"></div>
<div class="btn" style="left:675px;top:789px;width:134px;height:58px"></div>
<div class="btn" style="left:814px;top:789px;width:58px;height:58px"></div>
<div class="a" style="left:993px;top:784px;width:48px;height:66px;border:1px solid #999;box-shadow:inset 1px 1px 0 #fff,1px 1px 0 #fff"></div>
<div class="a b" style="left:994px;top:825px;width:48px;text-align:center;font-size:16.6px;line-height:18px;color:#222">04:03</div>
<svg class="a" style="left:600px;top:780px" width="450" height="72" viewBox="600 780 450 72">
<defs><linearGradient id="g3d" x1="0" y1="1" x2="1" y2="0"><stop offset="0" stop-color="#56c28e"/><stop offset="0.5" stop-color="#64cb9b"/><stop offset="0.5" stop-color="#72d2a6"/><stop offset="1" stop-color="#6fd0a4"/></linearGradient>
<clipPath id="cg"><rect x="676" y="794" width="132" height="52"/></clipPath></defs>
<!-- disabled disc -->
<g fill="none" stroke="#c4c4c4">
<path d="M655.3 819 A17 17 0 1 0 648 836.3" stroke-width="3.4"/>
<circle cx="638.4" cy="822.2" r="3.6" stroke-width="1.4"/>
<path d="M622.5 805 Q638 795 652 804" stroke-width="1.3"/>
<path d="M651.5 819 L655 825.5 L662 827 L655.5 831.5 L653.5 838.5 L650 832.5 L644 830.5 L650 826 Z" stroke-width="1.2"/>
<path d="M651.5 819 L653.5 838.5 M644 830.5 L662 827" stroke-width="1.6"/>
</g>
<path d="M650 801 L657.5 808.5 L651 808 Z" fill="#c4c4c4"/>
<!-- grind icon -->
<g clip-path="url(#cg)">
<circle cx="766.5" cy="787.5" r="36" fill="none" stroke="#6aaee6" stroke-width="3"/>
<circle cx="766.5" cy="794" r="7.5" fill="#6aaee6"/>
</g>
<g fill="none" stroke="#3e4e61" stroke-width="1.3">
<path d="M682.5 811 H719 C730 812 745 823 773 833.6 L781.8 823.8"/>
<path d="M683.5 835 H713 C720 834.5 726 832 731.5 830.8"/>
<path d="M773 833.6 H741 C728 830 718 822 710 818.2 C703 815.5 699.5 818.5 700.5 826 C701.5 833 707 834.5 713 835"/>
<path d="M729.5 814 C732 812.5 735 812.2 738 812"/>
</g>
<!-- 3D icon -->
<clipPath id="c3d"><rect x="819" y="794" width="48" height="47.8" rx="4.5"/></clipPath>
<linearGradient id="g3l" gradientUnits="userSpaceOnUse" x1="849" y1="822" x2="838" y2="840"><stop offset="0" stop-color="#84d8b0"/><stop offset="1" stop-color="#55c08c"/></linearGradient>
<g clip-path="url(#c3d)">
<rect x="819" y="794" width="48" height="48" fill="#66cb9c"/>
<path d="M819 803 L867 833.6 V842 H819 Z" fill="url(#g3l)"/>
</g>
<circle cx="842.9" cy="818.1" r="15.9" fill="none" stroke="#fff" stroke-width="1.3"/>
<text x="843" y="824.2" text-anchor="middle" font-family="Liberation Sans" font-weight="bold" font-size="16.5" fill="#fff">3D</text>
<!-- clock -->
<circle cx="1017.5" cy="805.4" r="10.6" fill="none" stroke="#3e4e61" stroke-width="1.5"/>
<path d="M1018.5 798 V806 L1012 811.3" fill="none" stroke="#6aaee6" stroke-width="1.5"/>
</svg>
<!-- ANCA logo -->
<svg class="a" style="left:1105px;top:55px" width="105" height="37" viewBox="1105 55 105 37">
<g fill="#231f20">
<path d="M1112.5 78.7 L1139 59.3 H1141 L1137.4 78.7 H1131.3 L1131.3 77.2 H1121.9 L1120 78.7 Z M1129 72.8 L1132.9 70 L1132.7 72.8 Z" fill-rule="evenodd"/>
<path d="M1139.8 78.7 L1143.5 59.3 H1151 L1154.2 68 L1156.3 59.3 H1162.1 L1158.3 78.7 H1152 L1148.8 70.5 L1146.2 78.7 Z"/>
<path d="M1164.8 59.3 H1178.8 L1177 66.6 H1169.2 L1168.2 72.2 H1175.7 L1174.5 78.7 H1161 Z"/>
<path d="M1176.8 78.7 L1180.6 59.3 H1182.4 L1201.3 78.7 H1193.6 L1192.5 77.3 H1183.3 L1182.8 78.7 Z M1184.2 70 L1187.3 73.1 H1183.8 Z" fill-rule="evenodd"/>
</g>
<text x="1112" y="89.8" font-family="Liberation Sans" font-size="9" fill="#e8232a" textLength="90" lengthAdjust="spacingAndGlyphs">CNC MACHINES</text>
</svg>

</body></html>
